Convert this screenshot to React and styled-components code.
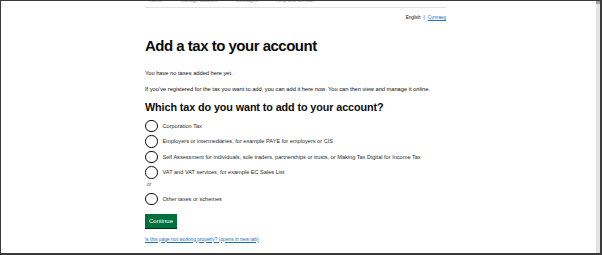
import React from "react";
import styled, { createGlobalStyle } from "styled-components";

const Global = createGlobalStyle`
  html, body { margin: 0; padding: 0; background: #fff; }
  body { font-family: "Liberation Sans", Arial, sans-serif; color: #0b0c0c; }
  * { box-sizing: border-box; }
`;

const Frame = styled.div`
  width: 602px;
  height: 255px;
  border: 1px solid #3a3a3a;
  border-right-width: 2px;
  border-bottom-width: 2px;
  display: flex;
  overflow: hidden;
  background: #fff;
`;

const Page = styled.div`
  flex: 1;
  display: flex;
  justify-content: center;
  overflow: hidden;
`;

const Scrollbar = styled.div`
  width: 4px;
  background: #e3e3e3;
  display: flex;
  flex-direction: column;
`;

const Thumb = styled.div`
  height: 3px;
  background: #a0a0a0;
`;

const Column = styled.div`
  width: 301px;
  margin-left: -6px;
  display: flex;
  flex-direction: column;
`;

const Nav = styled.nav`
  display: flex;
  gap: 18px;
  font-size: 5px;
  line-height: 5px;
  color: #9a9a9a;
  height: 7px;
  padding-left: 4px;
  border-bottom: 1px solid #e2e2e2;
  align-items: flex-start;
  overflow: hidden;
`;

const NavItem = styled.span`
  margin-top: -3px;
`;

const LangBar = styled.div`
  display: flex;
  justify-content: flex-end;
  align-items: center;
  gap: 2px;
  font-size: 4.5px;
  margin-top: 6px;
  height: 6px;
`;

const LangCurrent = styled.span`
  color: #0b0c0c;
`;

const LangSep = styled.span`
  color: #0b0c0c;
  padding: 0 1px;
`;

const LangLink = styled.a`
  color: #1d70b8;
  text-decoration: underline;
`;

const Heading = styled.h1`
  margin: 17px 0 0;
  font-size: 15px;
  line-height: 18px;
  font-weight: 700;
  letter-spacing: -0.5px;
`;

const Para = styled.p`
  margin: ${p => p.$top}px 0 0;
  font-size: 5.7px;
  line-height: 8px;
`;

const SubHeading = styled.h2`
  margin: 7px 0 0;
  font-size: 10.8px;
  line-height: 14px;
  font-weight: 700;
  letter-spacing: -0.1px;
`;

const Options = styled.div`
  display: flex;
  flex-direction: column;
  margin-top: 4px;
`;

const Option = styled.label`
  display: flex;
  align-items: center;
  gap: 5px;
  height: 15.5px;
  font-size: 5.6px;
  color: #2a2a2a;
`;

const Circle = styled.span`
  width: 12.5px;
  height: 12.5px;
  border: 1.2px solid #0b0c0c;
  border-radius: 50%;
  flex: none;
`;

const Or = styled.div`
  font-size: 5px;
  color: #555;
  padding-left: 2px;
  height: 11px;
  line-height: 9px;
`;

const Button = styled.button`
  align-self: flex-start;
  margin-top: 7.5px;
  background: #00703c;
  color: #fff;
  border: none;
  box-shadow: 0 1px 0 #002d18;
  font-family: inherit;
  font-size: 6px;
  height: 14px;
  width: 32px;
  padding: 0;
`;

const HelpLink = styled.a`
  margin-top: 8.5px;
  font-size: 4.85px;
  color: #1d70b8;
  text-decoration: underline;
`;

const options = [
  "Corporation Tax",
  "Employers or intermediaries, for example PAYE for employers or CIS",
  "Self Assessment for individuals, sole traders, partnerships or trusts, or Making Tax Digital for Income Tax",
  "VAT and VAT services, for example EC Sales List",
];

export default function App() {
  return (
    <>
      <Global />
      <Frame>
        <Page>
          <Column>
            <Nav>
              <NavItem>Home</NavItem>
              <NavItem>Manage account</NavItem>
              <NavItem>Messages</NavItem>
              <NavItem>Help and contact</NavItem>
            </Nav>
            <LangBar>
              <LangCurrent>English</LangCurrent>
              <LangSep>|</LangSep>
              <LangLink href="#">Cymraeg</LangLink>
            </LangBar>
            <Heading>Add a tax to your account</Heading>
            <Para $top={14}>You have no taxes added here yet.</Para>
            <Para $top={8}>
              If you’ve registered for the tax you want to add, you can add it here now. You can then view and manage it online.
            </Para>
            <SubHeading>Which tax do you want to add to your account?</SubHeading>
            <Options>
              {options.map(o => (
                <Option key={o}>
                  <Circle />
                  {o}
                </Option>
              ))}
              <Or>or</Or>
              <Option>
                <Circle />
                Other taxes or schemes
              </Option>
            </Options>
            <Button>Continue</Button>
            <HelpLink href="#">Is this page not working properly? (opens in new tab)</HelpLink>
          </Column>
        </Page>
        <Scrollbar>
          <Thumb />
        </Scrollbar>
      </Frame>
    </>
  );
}
